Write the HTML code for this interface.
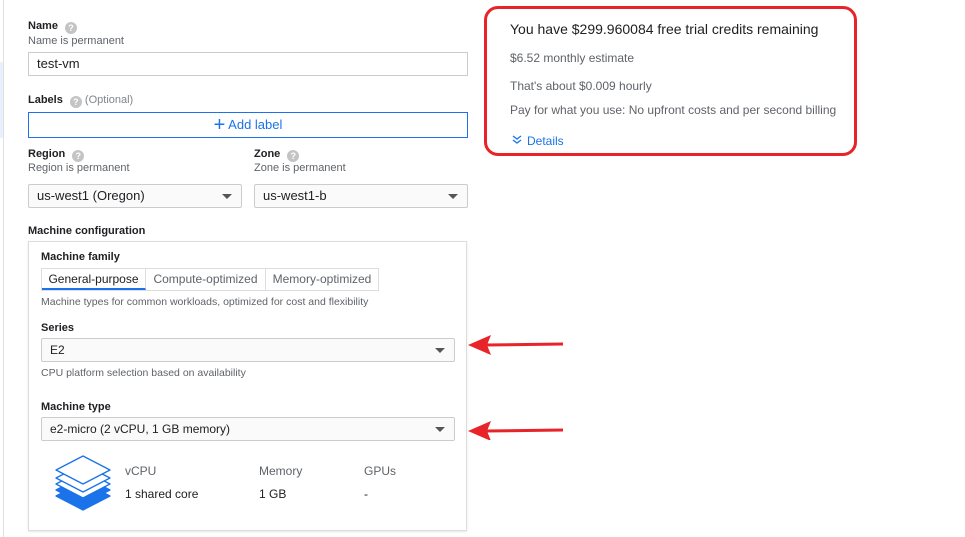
<!DOCTYPE html><html><head><style>
body{margin:0;width:965px;height:537px;background:#fff;font-family:"Liberation Sans",Arial,sans-serif;position:relative;overflow:hidden;color:#202124}
.a{position:absolute;white-space:nowrap}
.b{font-weight:bold;font-size:11px}
.s{font-size:11px;color:#5f6368}
.q{display:inline-block;width:12px;height:12px;border-radius:50%;background:#c4c4c4;color:#fff;font-size:9px;text-align:center;line-height:12px;font-weight:bold;vertical-align:-2px;margin-left:7px}
.box{position:absolute;border:1px solid #ccc;box-sizing:border-box;font-size:13px;padding-left:8px}
.sel{background:#fafafa;border-radius:2px}
.tri{position:absolute;right:9px;top:50%;margin-top:-2px;width:0;height:0;border-left:5px solid transparent;border-right:5px solid transparent;border-top:5px solid #555}
</style></head><body>
<div class="a" style="left:3px;top:0;width:1px;height:537px;background:#e0e0e0"></div>
<div class="a" style="left:0;top:62px;width:3px;height:76px;background:#e8f0fe"></div>

<div class="a b" style="left:28px;top:20px">Name<span class="q">?</span></div>
<div class="a s" style="left:28px;top:35px">Name is permanent</div>
<div class="box" style="left:28px;top:52px;width:440px;height:24px;line-height:22px">test-vm</div>

<div class="a b" style="left:28px;top:94px">Labels<span class="q">?</span> <span style="font-weight:normal;color:#80868b">(Optional)</span></div>
<div class="box" style="left:28px;top:112px;width:440px;height:26px;border-color:#1a73e8;color:#1a73e8;text-align:center;line-height:24px;padding:0"><span style="font-size:20px;vertical-align:-2px">+</span> Add label</div>

<div class="a b" style="left:28px;top:148px">Region<span class="q">?</span></div>
<div class="a s" style="left:28px;top:162px">Region is permanent</div>
<div class="box sel" style="left:28px;top:184px;width:214px;height:24px;line-height:22px">us-west1 (Oregon)<div class="tri"></div></div>
<div class="a b" style="left:254px;top:148px">Zone<span class="q">?</span></div>
<div class="a s" style="left:254px;top:162px">Zone is permanent</div>
<div class="box sel" style="left:254px;top:184px;width:214px;height:24px;line-height:22px">us-west1-b<div class="tri"></div></div>

<div class="a b" style="left:28px;top:225px">Machine configuration</div>
<div class="a" style="left:28px;top:241px;width:439px;height:290px;border:1px solid #ddd;box-sizing:border-box;box-shadow:0 1px 2px rgba(0,0,0,.1)"></div>
<div class="a b" style="left:41px;top:251px">Machine family</div>
<div class="a" style="left:41px;top:268px;width:338px;height:23px;border:1px solid #ddd;box-sizing:border-box;font-size:12px;display:flex">
<div style="width:103px;text-align:center;line-height:20px;border-bottom:2px solid #1a73e8;border-right:1px solid #ddd">General-purpose</div>
<div style="width:119px;text-align:center;line-height:21px;color:#5f6368;border-right:1px solid #ddd">Compute-optimized</div>
<div style="flex:1;text-align:center;line-height:21px;color:#5f6368">Memory-optimized</div></div>
<div class="a s" style="left:41px;top:296px;font-size:10.5px">Machine types for common workloads, optimized for cost and flexibility</div>
<div class="a b" style="left:41px;top:322px">Series</div>
<div class="box sel" style="left:41px;top:338px;width:414px;height:24px;line-height:22px;font-size:12px">E2<div class="tri"></div></div>
<div class="a s" style="left:41px;top:367px;font-size:10.5px">CPU platform selection based on availability</div>
<div class="a b" style="left:41px;top:401px">Machine type</div>
<div class="box sel" style="left:41px;top:417px;width:414px;height:24px;line-height:22px;font-size:12px">e2-micro (2 vCPU, 1 GB memory)<div class="tri"></div></div>

<svg class="a" style="left:54px;top:454px" width="60" height="60" viewBox="0 0 60 60">
<g stroke="#1a73e8" stroke-width="1.3" stroke-linejoin="round">
<path d="M2 42 L29 28 L56 42 L29 56 Z" fill="#1a73e8"/>
<path d="M2 36 L29 22 L56 36 L29 50 Z" fill="#1a73e8"/>
<path d="M2 30 L29 16 L56 30 L29 44 Z" fill="#fff"/>
<path d="M2 24 L29 10 L56 24 L29 38 Z" fill="#fff"/>
<path d="M2 16 L29 2 L56 16 L29 30 Z" fill="#fff"/>
</g></svg>
<div class="a" style="left:125px;top:464px;font-size:12px;color:#5f6368">vCPU</div>
<div class="a" style="left:125px;top:487px;font-size:12px">1 shared core</div>
<div class="a" style="left:259px;top:464px;font-size:12px;color:#5f6368">Memory</div>
<div class="a" style="left:259px;top:487px;font-size:12px">1 GB</div>
<div class="a" style="left:364px;top:464px;font-size:12px;color:#5f6368">GPUs</div>
<div class="a" style="left:364px;top:487px;font-size:12px">-</div>

<div class="a" style="left:484px;top:6px;width:373px;height:150px;border:3px solid #e8232a;border-radius:14px;box-sizing:border-box"></div>
<div class="a" style="left:510px;top:21px;font-size:14px">You have $299.960084 free trial credits remaining</div>
<div class="a" style="left:510px;top:51px;font-size:12px;color:#5f6368">$6.52 monthly estimate</div>
<div class="a" style="left:510px;top:79px;font-size:12px;color:#5f6368">That's about $0.009 hourly</div>
<div class="a" style="left:510px;top:103px;font-size:12px;color:#5f6368">Pay for what you use: No upfront costs and per second billing</div>
<svg class="a" style="left:512px;top:135px" width="10" height="10"><path d="M1 1 L5 4 L9 1 M1 5 L5 8 L9 5" stroke="#1a73e8" stroke-width="1.3" fill="none"/></svg>
<div class="a" style="left:527px;top:134px;font-size:12px;color:#1a73e8">Details</div>

<svg class="a" style="left:465px;top:330px" width="105" height="110">
<path d="M20 15 L98 14" stroke="#e8232a" stroke-width="3"/><path d="M3 15 L26 5 L22 15 L26 25 Z" fill="#e8232a"/>
<path d="M20 101 L98 100" stroke="#e8232a" stroke-width="3"/><path d="M3 101 L26 91 L22 101 L26 111 Z" fill="#e8232a"/>
</svg>
</body></html>
